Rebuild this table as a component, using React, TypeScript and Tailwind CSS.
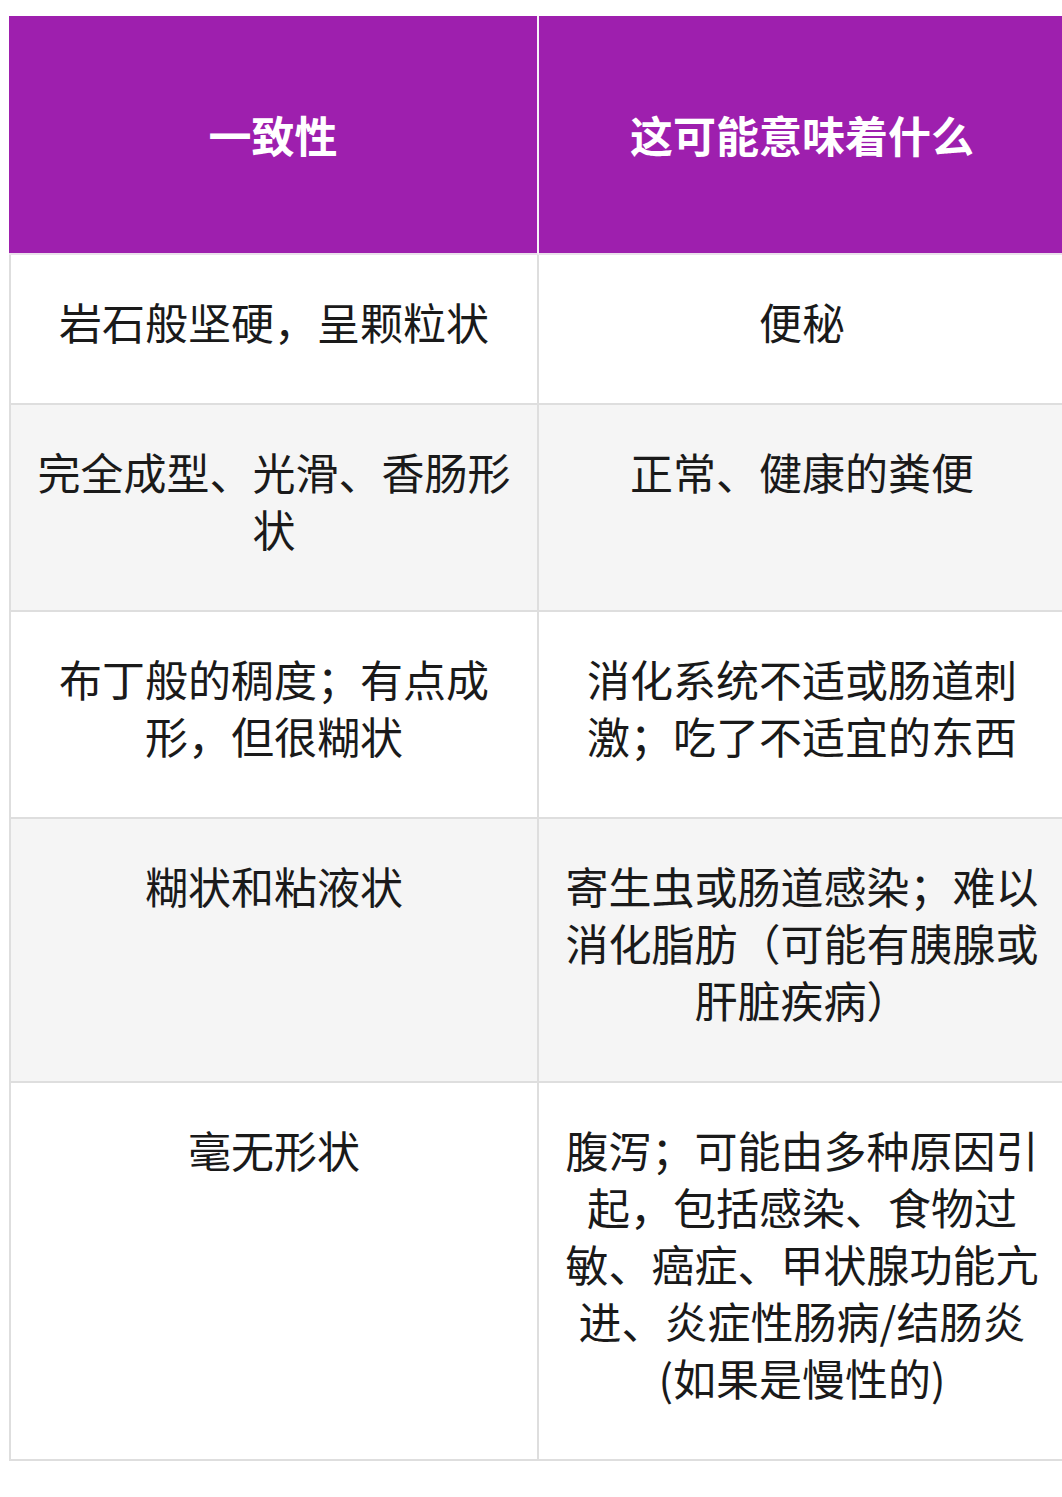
import React from "react";

const rows: { a: string; b: string; bg: string }[] = [
  { a: "岩石般坚硬，呈颗粒状", b: "便秘", bg: "bg-white" },
  { a: "完全成型、光滑、香肠形状", b: "正常、健康的粪便", bg: "bg-[#f5f5f5]" },
  { a: "布丁般的稠度；有点成形，但很糊状", b: "消化系统不适或肠道刺激；吃了不适宜的东西", bg: "bg-white" },
  { a: "糊状和粘液状", b: "寄生虫或肠道感染；难以消化脂肪（可能有胰腺或肝脏疾病）", bg: "bg-[#f5f5f5]" },
  { a: "毫无形状", b: "腹泻；可能由多种原因引起，包括感染、食物过敏、癌症、甲状腺功能亢进、炎症性肠病/结肠炎(如果是慢性的)", bg: "bg-white" },
];

export default function App() {
  return (
    <div
      className="w-[1062px] h-[1497px] overflow-hidden bg-white pt-[16px] pl-[9px]"
      style={{ fontFamily: '"Noto Sans CJK SC", "Noto Sans", sans-serif' }}
    >
      <div className="w-[1058px]">
        <div className="grid grid-cols-[530px_528px] h-[239px]">
          <div className="bg-[#9e1fae] border-r-2 border-b-2 border-r-[#f7f2f8] border-b-[#ebe1ec] flex items-center justify-center text-white font-bold text-[43px] leading-[57px]">
            一致性
          </div>
          <div className="bg-[#9e1fae] border-r-2 border-b-2 border-r-[#f7f2f8] border-b-[#ebe1ec] flex items-center justify-center text-white font-bold text-[43px] leading-[57px]">
            这可能意味着什么
          </div>
        </div>
        {rows.map((r, i) => (
          <div key={i} className={`grid grid-cols-[530px_528px] ${r.bg}`}>
            <div className="border-l-2 border-r-2 border-b-2 border-[#dedede] px-5 pt-[38px] pb-[53px] text-center text-[43px] leading-[57px] text-[#1a1a1a]">
              {r.a}
            </div>
            <div className="border-r-2 border-b-2 border-[#dedede] px-5 pt-[38px] pb-[53px] text-center text-[43px] leading-[57px] text-[#1a1a1a]">
              {r.b}
            </div>
          </div>
        ))}
      </div>
    </div>
  );
}
